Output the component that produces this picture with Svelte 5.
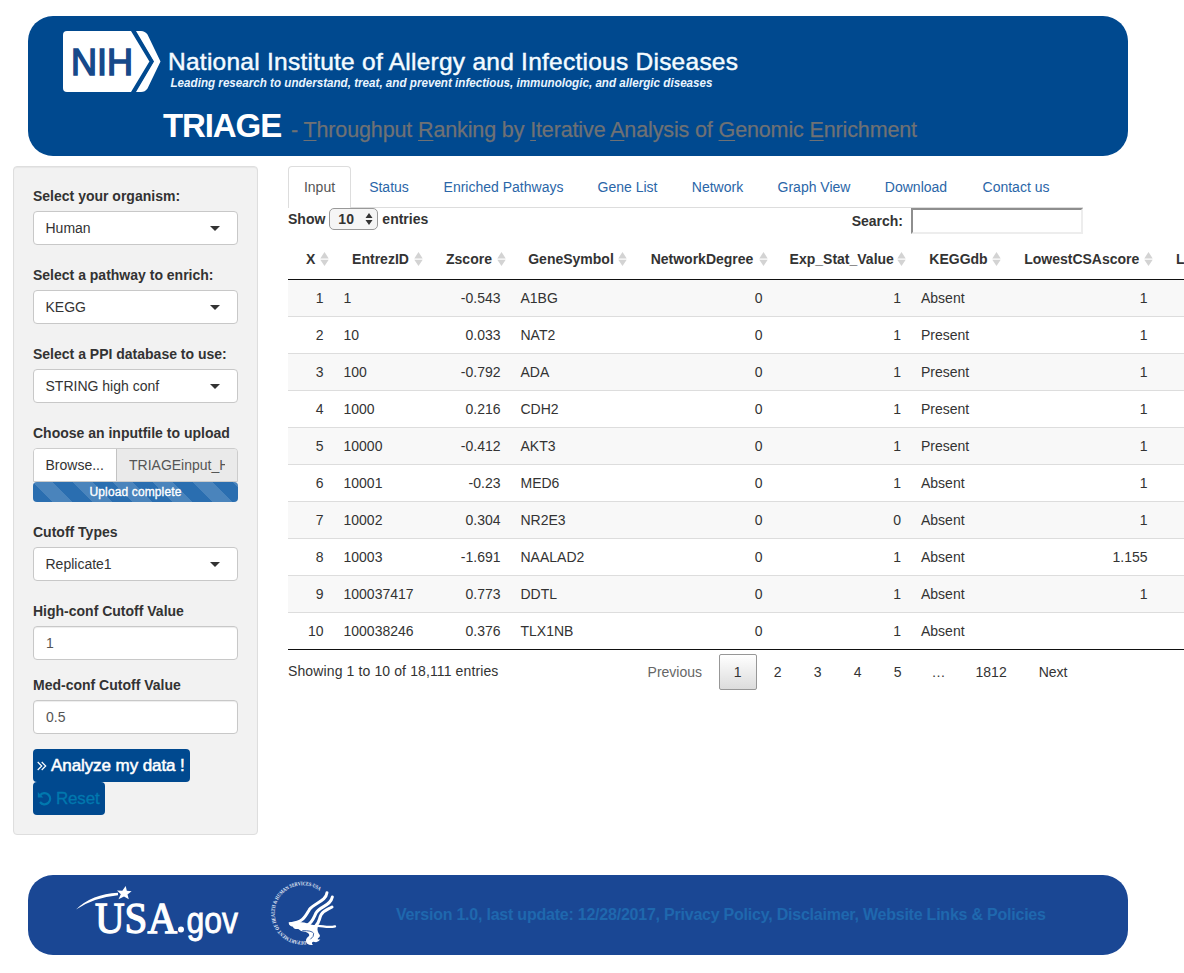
<script>
  const tabs = [
    ['Input', 63], ['Status', 72], ['Enriched Pathways', 153], ['Gene List', 91],
    ['Network', 85], ['Graph View', 104], ['Download', 96], ['Contact us', 100]
  ];
  const columns = [
    ['X', 45.5], ['EntrezID', 94], ['Zscore', 83], ['GeneSymbol', 121], ['NetworkDegree', 141],
    ['Exp_Stat_Value', 138.5], ['KEGGdb', 95], ['LowestCSAscore', 151.5], ['LowestCSArank', 144.5]
  ];
  const textColumns = [1, 3, 6];
  const rows = [
    ['1', '1', '-0.543', 'A1BG', '0', '1', 'Absent', '1', ''],
    ['2', '10', '0.033', 'NAT2', '0', '1', 'Present', '1', ''],
    ['3', '100', '-0.792', 'ADA', '0', '1', 'Present', '1', ''],
    ['4', '1000', '0.216', 'CDH2', '0', '1', 'Present', '1', ''],
    ['5', '10000', '-0.412', 'AKT3', '0', '1', 'Present', '1', ''],
    ['6', '10001', '-0.23', 'MED6', '0', '1', 'Absent', '1', ''],
    ['7', '10002', '0.304', 'NR2E3', '0', '0', 'Absent', '1', ''],
    ['8', '10003', '-1.691', 'NAALAD2', '0', '1', 'Absent', '1.155', ''],
    ['9', '100037417', '0.773', 'DDTL', '0', '1', 'Absent', '1', ''],
    ['10', '100038246', '0.376', 'TLX1NB', '0', '1', 'Absent', '', '']
  ];
  const title = ['Throughput', 'Ranking', 'by', 'Iterative', 'Analysis', 'of', 'Genomic', 'Enrichment'];
  const pages = ['2', '3', '4', '5'];
</script>

{#snippet picker(label, value)}
  <div class="group">
    <div class="label">{label}</div>
    <div class="control select"><span>{value}</span><i class="caret"></i></div>
  </div>
{/snippet}

<div class="page">
  <header>
    <svg class="nih" width="700" height="66" viewBox="0 0 700 66">
      <path d="M4 1H69L88 31.500L69 62H4Q0 62 0 58V5Q0 1 4 1Z" fill="#fff" />
      <path d="M73 1H78Q82 1 84.500 4.500L97.500 31.500L84.500 58.500Q82 62 78 62H73L91 31.500Z" fill="#fff" />
      <path d="M69.500 0L88.500 31.500L69.500 63" fill="none" stroke="#00498f" stroke-width="3.500" />
      <text x="8" y="44.500" font-size="36.500" textLength="62" lengthAdjust="spacingAndGlyphs" fill="#16498a" stroke="#16498a" stroke-width="1.500">NIH</text>
      <text x="105" y="40" font-size="24.500" textLength="570" fill="#f4fbff" stroke="#f4fbff" stroke-width=".45">National Institute of Allergy and Infectious Diseases</text>
      <text x="107.500" y="57" font-size="12" font-style="italic" font-weight="bold" textLength="542" lengthAdjust="spacingAndGlyphs" fill="#e9f5ff">Leading research to understand, treat, and prevent infectious, immunologic, and allergic diseases</text>
    </svg>
    <h1><b>TRIAGE</b><small>- {#each title as word, i}{#if i === 2 || i === 5}{word}{:else}<u>{word[0]}</u>{word.slice(1)}{/if}{i < title.length - 1 ? ' ' : ''}{/each}</small></h1>
  </header>

  <div class="main">
    <aside>
      {@render picker('Select your organism:', 'Human')}
      {@render picker('Select a pathway to enrich:', 'KEGG')}
      {@render picker('Select a PPI database to use:', 'STRING high conf')}
      <div class="group">
        <div class="label">Choose an inputfile to upload</div>
        <div class="file"><span class="browse">Browse...</span><span class="name"><span>TRIAGEinput_H</span></span></div>
        <div class="progress">Upload complete</div>
      </div>
      {@render picker('Cutoff Types', 'Replicate1')}
      <div class="group tight">
        <div class="label">High-conf Cutoff Value</div>
        <div class="control field">1</div>
      </div>
      <div class="group tight">
        <div class="label">Med-conf Cutoff Value</div>
        <div class="control field">0.5</div>
      </div>
      <div class="action analyze">
        <svg width="10" height="10" viewBox="0 0 10 10"><path d="M.7 1L4.700 5L.7 9M4.700 1L8.700 5L4.700 9" fill="none" stroke="#fff" stroke-width="1.200" /></svg>
        <span>Analyze my data !</span>
      </div>
      <div class="action reset">
        <svg width="15" height="15" viewBox="0 0 15 15"><path d="M3 4.500A5.600 5.600 0 1 1 3 11" fill="none" stroke="#0078ae" stroke-width="2.200" /><path d="M.8 1V6.500H6.300Z" fill="#0078ae" /></svg>
        <span>Reset</span>
      </div>
    </aside>

    <section>
      <nav>
        {#each tabs as [name, width], i}
          <span class:active={i === 0} style="width:{width}px">{name}</span>
        {/each}
      </nav>
      <div class="tools">
        <div class="length">Show
          <span class="count">10<svg width="8" height="12" viewBox="0 0 8 12"><path d="M0.500 5L4 0L7.500 5ZM0.500 7L4 12L7.500 7Z" fill="#333" /></svg></span>
          entries</div>
        <div class="search">Search:<span></span></div>
      </div>
      <div class="scroll">
        <table>
          <colgroup>{#each columns as [name, width] (name)}<col style="width:{width}px" />{/each}</colgroup>
          <thead>
            <tr>
              {#each columns as [name]}
                <th><div>{name}<svg width="9" height="14" viewBox="0 0 9 14"><path d="M.3 6.400L4.500 0L8.700 6.400ZM.3 7.800L4.500 14L8.700 7.800Z" fill="#d3d3d3" /></svg></div></th>
              {/each}
            </tr>
          </thead>
          <tbody>
            {#each rows as row}
              <tr>{#each row as cell, i}<td class:left={textColumns.includes(i)}>{cell}</td>{/each}</tr>
            {/each}
          </tbody>
        </table>
      </div>
      <div class="bottom">
        <div class="info">Showing 1 to 10 of 18,111 entries</div>
        <div class="pages">
          <span class="muted">Previous</span><span class="current">1</span>{#each pages as p}<span>{p}</span>{/each}<em>…</em><span>1812</span><span>Next</span>
        </div>
      </div>
    </section>
  </div>

  <footer>
    <svg class="usa" width="170" height="60" viewBox="0 0 170 60" fill="#fff">
      <path d="M0 23.500Q16 8 42 6.800L42 9.300Q18 11.500 0 23.500Z" />
      <path d="M49.700 0L50.800 4.800L55.600 5.200L51.500 8.400L52.800 13.300L48 10.500L42.500 13.300L44.800 8.200L41 4.600L46.300 4.800Z" />
      <text x="19" y="46.500" font-family="'Liberation Serif', serif" font-size="43.500" textLength="82" lengthAdjust="spacingAndGlyphs" stroke="#fff" stroke-width="1.300">USA</text>
      <circle cx="105" cy="43.500" r="3" />
      <text x="110.500" y="46.500" font-size="36.500" textLength="51.500" lengthAdjust="spacingAndGlyphs" stroke="#fff" stroke-width=".8">gov</text>
    </svg>
    <svg class="hhs" width="70" height="72" viewBox="0 0 210 216">
      <defs><path id="seal-ring" d="M114 186A84 84 0 1 1 167 47" /></defs>
      <text font-family="'Liberation Serif', serif" font-size="16" font-weight="bold" fill="#e6edf8"><textPath href="#seal-ring" textLength="328" lengthAdjust="spacingAndGlyphs">DEPARTMENT OF HEALTH &amp; HUMAN SERVICES·USA</textPath></text>
      <g fill="none" stroke="#fff" stroke-width="9" stroke-linecap="round" stroke-linejoin="round">
        <path d="M177 41C174 68 137 72 124 92C112 112 106 130 68 134" />
        <path d="M193 54C188 80 156 82 144 102C137 116 134 130 118 138" />
        <path d="M192 84C180 91 168 94 160 106C152 120 156 130 142 142" />
        <path d="M138 142C158 136 174 149 201 142" stroke-width="7" />
      </g>
      <path d="M62 130Q100 125 132 137L151 141Q145 152 153 165Q160 171 150 178Q146 183 157 181Q151 193 136 188Q128 191 135 198Q116 200 114 187Q113 178 123 171Q127 164 112 158Q99 159 91 150Q76 151 75 143Q62 142 62 130Z" fill="#fff" />
      <path d="M103 155Q131 154 137 163Q139 172 127 181" fill="none" stroke="#1a4794" stroke-width="2.500" />
    </svg>
    <p>Version 1.0, last update: 12/28/2017, Privacy Policy, Disclaimer, Website Links &amp; Policies</p>
  </footer>
</div>

<style>
  :global(body) { margin: 0; background: #fff; overflow: hidden; }
  .page { box-sizing: border-box; width: 1184px; height: 973px; padding-top: 16px; overflow: hidden; font: 14px/20px "Liberation Sans", Arial, sans-serif; color: #333; }
  .page *, .page { box-sizing: border-box; }
  svg { display: block; flex: none; font-family: "Liberation Sans", Arial, sans-serif; }
  header { width: 1100px; height: 140px; margin-left: 28px; padding: 14px 0 0 35px; border-radius: 25px; background: #00498f; }
  h1 { display: flex; align-items: baseline; margin: 10px 0 0 100px; height: 40px; line-height: 40px; font-weight: normal; white-space: nowrap; }
  h1 b { width: 128px; font-size: 33px; letter-spacing: -1.1px; color: #fff; }
  h1 small { font-size: 21.5px; letter-spacing: -.13px; color: #6f7174; -webkit-text-stroke: .25px; }
  u { text-decoration-thickness: 1px; text-underline-offset: 3px; }
  .main { display: flex; height: 669px; margin-top: 10px; padding-left: 13px; }
  aside { width: 245px; height: 669px; padding: 19px; border: 1px solid #dedede; border-radius: 4px; background: #f2f2f2; box-shadow: inset 0 1px 1px rgba(0,0,0,.05); }
  .group { margin-bottom: 20px; }
  .tight { margin-bottom: 15px; }
  .label { height: 20px; margin-bottom: 5px; font-weight: bold; white-space: nowrap; }
  .control { height: 34px; padding: 6px 12px; border: 1px solid #c8c8c8; border-radius: 4px; background: #fff; }
  .select { display: flex; align-items: center; justify-content: space-between; padding: 0 17px 0 11.5px; }
  .caret { border: 5px solid transparent; border-top-color: #333; border-bottom: 0; }
  .field { color: #555; box-shadow: inset 0 1px 1px rgba(0,0,0,.075); }
  .file { display: flex; height: 34px; border: 1px solid #ccc; border-radius: 4px 4px 0 0; line-height: 32px; overflow: hidden; }
  .browse { width: 84px; padding-left: 11.5px; background: #fff; border-right: 1px solid #c3c3c3; }
  .name { flex: 1; padding: 0 12px; background: #eaeaea; color: #555; }
  .name span { display: block; width: 96px; overflow: hidden; }
  .progress { height: 20px; border-radius: 4px; background-color: #2a6eb0; background-image: linear-gradient(45deg, rgba(255,255,255,.15) 25%, transparent 25%, transparent 50%, rgba(255,255,255,.15) 50%, rgba(255,255,255,.15) 75%, transparent 75%); background-size: 40px 40px; color: #fff; font-size: 12px; letter-spacing: .13px; text-align: center; -webkit-text-stroke: .35px; }
  .action { display: flex; align-items: center; height: 33px; padding-left: 4px; gap: 4px; border-radius: 4px; background: #00498f; font-size: 17px; white-space: nowrap; }
  .analyze { width: 157px; color: #fff; letter-spacing: -.08px; -webkit-text-stroke: .5px; }
  .reset { width: 72px; color: #0078ae; letter-spacing: -.2px; -webkit-text-stroke: .3px; }
  section { width: 896px; margin-left: 30px; }
  nav { display: flex; gap: 2px; width: 795px; height: 42px; border-bottom: 1px solid #ddd; }
  nav span { height: 42px; flex: none; padding-top: 11px; text-align: center; color: #2a66a8; white-space: nowrap; }
  nav .active { color: #555; background: #fff; border: 1px solid #ddd; border-bottom: 0; border-radius: 4px 4px 0 0; padding-top: 10px; }
  .tools { display: flex; justify-content: space-between; width: 795px; height: 31px; font-weight: bold; }
  .length { display: flex; gap: 4px; height: 22px; line-height: 22px; }
  .count { display: flex; align-items: center; justify-content: space-between; width: 49px; height: 22px; padding: 0 4px 0 8px; border: 1px solid #999; border-radius: 5px; background: #f5f5f5; }
  .search { display: flex; line-height: 26px; }
  .search span { width: 172px; height: 26px; margin-left: 8px; border: 2px solid #ededed; border-color: #8e8e8e #ededed #ededed #8e8e8e; }
  .scroll { overflow: hidden; width: 896px; }
  table { width: 1014px; table-layout: fixed; border-collapse: separate; border-spacing: 0; border-bottom: 1px solid #111; }
  th { height: 41px; padding: 0; border-bottom: 1px solid #111; white-space: nowrap; }
  th div { position: relative; line-height: 20px; }
  th svg { position: absolute; right: 5px; top: 3px; }
  td { height: 37px; padding: 0 10px; border-top: 1px solid #ddd; text-align: right; }
  tr:first-child td { border-top: 0; }
  tbody tr:first-child td { height: 36px; }
  tbody tr:nth-child(odd) { background: #f8f8f8; }
  td.left { text-align: left; }
  .bottom { display: flex; justify-content: space-between; width: 795px; padding-top: 4px; }
  .info { padding-top: 7px; letter-spacing: .12px; }
  .pages { display: flex; gap: 2px; line-height: 36px; }
  .pages span { min-width: 38px; height: 36px; padding: 0 15px; text-align: center; }
  .pages em { width: 40px; font-style: normal; text-align: center; }
  .pages .muted { padding-right: 14.5px; color: #666; }
  .pages .current { padding: 0 14px; line-height: 34px; border: 1px solid #979797; border-radius: 2px; background: linear-gradient(#fff, #dcdcdc); }
  .pages span:last-child { padding-right: 15.5px; }
  footer { display: flex; width: 1100px; height: 80px; margin: 40px 0 0 28px; border-radius: 25px; background: #1a4794; }
  .usa { margin: 11px 0 0 48px; }
  .hhs { margin: 4px 0 0 22px; }
  p { margin: 30px 0 0 58px; font-size: 16px; font-weight: bold; letter-spacing: -.225px; color: #1f68ae; white-space: nowrap; }
</style>
